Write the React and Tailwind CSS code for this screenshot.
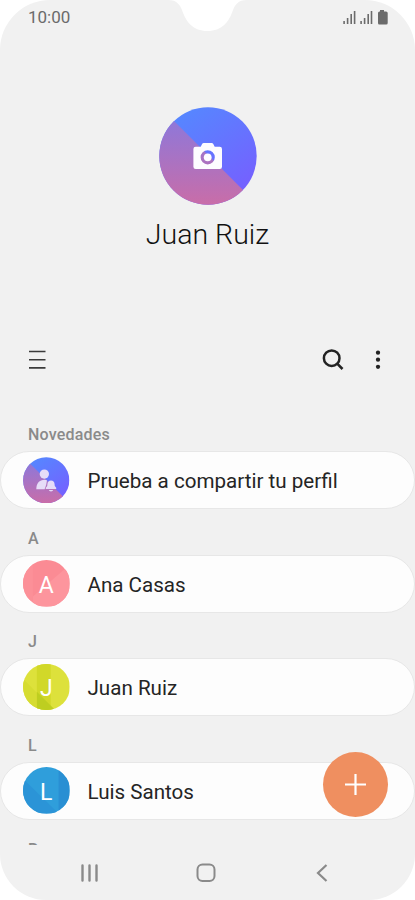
import React from 'react';

const sections = [
  { id: 1, label: 'Novedades', name: 'Prueba a compartir tu perfil', avatar: 'profile' },
  { id: 2, label: 'A', name: 'Ana Casas', avatar: 'A' },
  { id: 3, label: 'J', name: 'Juan Ruiz', avatar: 'J' },
  { id: 4, label: 'L', name: 'Luis Santos', avatar: 'L' },
];

const ProfileGradients = ({ id }) => (
  <defs>
    <linearGradient id={`${id}-top`} x1="0.2" y1="0" x2="0.85" y2="0.9">
      <stop offset="0" stopColor="#5489ff" />
      <stop offset="1" stopColor="#765fff" />
    </linearGradient>
    <linearGradient id={`${id}-bottom`} x1="0" y1="0" x2="0" y2="1">
      <stop offset="0.1" stopColor="#8b78dc" />
      <stop offset="1" stopColor="#c96da8" />
    </linearGradient>
    <clipPath id={`${id}-clip`}>
      <circle cx="49" cy="49" r="48.7" />
    </clipPath>
  </defs>
);

const ProfileBackground = ({ id }) => (
  <g clipPath={`url(#${id}-clip)`}>
    <rect width="98" height="98" fill={`url(#${id}-top)`} />
    <path d="M0 -1L98 97V98H0z" fill={`url(#${id}-bottom)`} />
  </g>
);

const CameraAvatar = () => (
  <svg viewBox="0 0 98 98" className="size-[98px]">
    <ProfileGradients id="hero" />
    <ProfileBackground id="hero" />
    <g transform="translate(-0.8 0)" fill="#fdfcff">
      <path
        fillRule="evenodd"
        d="M37.500 39.800h5l1.400-2.800q.5-1 1.700-1h7.800q1.200 0 1.700 1l1.400 2.800h5q2.300 0 2.300 2.300v17.600q0 2.300-2.300 2.300h-24q-2.300 0-2.300-2.300V42.100q0-2.300 2.300-2.300zM49.500 43.200a7.100 7.100 0 1 0 0 14.200a7.100 7.100 0 1 0 0-14.200z"
      />
      <circle cx="49.500" cy="50.300" r="3.900" />
    </g>
  </svg>
);

const ProfileAvatar = () => (
  <svg viewBox="0 0 98 98" className="size-[46.500px] shrink-0">
    <ProfileGradients id="row" />
    <ProfileBackground id="row" />
    <g fill="#e6dcf8">
      <circle cx="45" cy="36" r="9.800" />
      <path d="M28 68C28 56 34 48 46 48Q49 48 50.500 49Q49.500 60 45.500 68z" />
      <path d="M59 49.500Q66 49.500 66.500 57L67 61L70 65V67.500H48V65L51 61L51.500 57Q52 49.500 59 49.500zM54.500 69.500h9Q63 72.500 59 72.500T54.500 69.500z" />
    </g>
  </svg>
);

const avatarArt = {
  A: (
    <>
      <rect width="47" height="47" fill="#fb8b94" />
      <path d="M10 0V47H0V0z" fill="#fc9098" />
      <path d="M10 37L47 5V47H10z" fill="#fd959d" />
    </>
  ),
  J: (
    <>
      <rect width="47" height="47" fill="#dde13b" />
      <path d="M14 0H28V47H14z" fill="#d1d829" />
      <path d="M0 15L14 29V47H0z" fill="#d6dc32" />
      <path d="M14 28L33 47H14z" fill="#bece20" />
    </>
  ),
  L: (
    <>
      <rect width="47" height="47" fill="#2f9edb" />
      <path d="M0 12L35 46V47H0z" fill="#2b94d7" />
      <path d="M36 0H47V47H36z" fill="#298fd3" />
    </>
  ),
};

const LetterAvatar = ({ letter }) => (
  <div className="relative size-[46.500px] shrink-0 overflow-hidden rounded-full">
    <svg viewBox="0 0 47 47" className="size-full">
      {avatarArt[letter]}
    </svg>
    <span className="absolute inset-0 flex items-center justify-center pt-[3px] text-[23px] leading-none text-white">
      {letter}
    </span>
  </div>
);

const StatusBar = () => (
  <div className="relative flex h-[34px] items-center justify-between pl-7 pr-[27px] text-[#6b6b6b]">
    <span className="text-[17px] leading-none">10:00</span>
    <svg viewBox="0 0 415 34" className="absolute left-0 top-0 h-[34px] w-[415px]" fill="#fff">
      <path d="M168 0C177 0 180 5 182 10C186 22 193 31 207.500 31S229 22 233 10C235 5 238 0 247 0z" />
    </svg>
    <svg viewBox="0 0 45 16" className="h-4 w-[45px]" fill="currentColor">
      <path d="M0.300 12h1.600v3H.3zM3.800 9h1.600v6H3.800zM7.400 5h1.600v10H7.400zM10.800 2h1.600v13h-1.600z" />
      <path d="M17.300 12h1.600v3h-1.600zM20.800 9h1.600v6h-1.600zM24.400 5H26v10h-1.600zM27.700 2h1.600v13h-1.600z" />
      <path d="M37 1h4v1.500h2q1.700 0 1.700 1.500v10q0 1.500-1.500 1.500h-7Q35 15.500 35 14V4q0-1.500 1.500-1.500H37z" />
    </svg>
  </div>
);

const Toolbar = () => (
  <div className="flex h-10 items-center justify-between pl-[29px] pr-[34px] pt-0.5">
    <button aria-label="Menú">
      <svg viewBox="0 0 17 20" className="h-5 w-[17px]" stroke="#3b3b3b" strokeWidth="1.600">
        <path d="M0 1.500H16.500M0 9.700H16.500M0 17.900H16.500" />
      </svg>
    </button>
    <div className="flex items-center gap-[31px]">
      <button aria-label="Buscar">
        <svg viewBox="0 0 22 22" className="size-[22px]" fill="none" stroke="#232323" strokeWidth="2.500">
          <circle cx="9.700" cy="9.200" r="7.800" />
          <path d="M15.200 14.700L20.500 20" strokeWidth="2.600" />
        </svg>
      </button>
      <button aria-label="Más opciones">
        <svg viewBox="0 0 6 20" className="h-5 w-1.5" fill="#232323">
          <circle cx="3" cy="2.700" r="2.150" />
          <circle cx="3" cy="9.700" r="2.150" />
          <circle cx="3" cy="16.800" r="2.150" />
        </svg>
      </button>
    </div>
  </div>
);

const Section = ({ section }) => (
  <section>
    <h2 className="flex h-[45.500px] items-end pb-[7px] pl-7 text-[16px] font-medium leading-[19px] tracking-[0.200px] text-[#8a8a8a]">
      {section.label}
    </h2>
    <div className="flex h-[58px] items-center gap-[18px] rounded-full border border-[#e7e7e7] bg-[#fdfdfd] pl-[22px]">
      {section.avatar === 'profile' ? <ProfileAvatar /> : <LetterAvatar letter={section.avatar} />}
      <span className="whitespace-nowrap pt-[3px] text-[20.600px] text-[#252525]">{section.name}</span>
    </div>
  </section>
);

const NavigationBar = () => (
  <nav className="flex h-[55px] items-center pl-[81px]">
    <svg viewBox="0 0 18 18" className="size-[18px]" stroke="#8a8a8a" strokeWidth="2.400" strokeLinecap="round">
      <path d="M1.500 1.500V16.500M8.500 1.500V16.500M15.500 1.500V16.500" />
    </svg>
    <svg viewBox="0 0 20 20" className="ml-[96.500px] size-5" fill="none" stroke="#8a8a8a" strokeWidth="2">
      <rect x="1.500" y="1.500" width="17" height="16.500" rx="5" />
    </svg>
    <svg viewBox="0 0 12 18" className="ml-[100.500px] h-[18px] w-3" fill="none" stroke="#8a8a8a" strokeWidth="2.200">
      <path d="M10.500 1L2 9L10.500 17" />
    </svg>
  </nav>
);

export default function App() {
  return (
    <div className="h-[900px] w-[415px] bg-white font-['Roboto',sans-serif]">
      <div className="relative flex h-full flex-col overflow-hidden rounded-t-[50px] rounded-b-[46px] bg-[#f1f1f1]">
        <StatusBar />
        <header className="flex h-[305px] flex-col items-center pt-[73px]">
          <CameraAvatar />
          <h1 className="mt-2.5 text-[28.500px] font-light leading-10 text-[#111]">Juan Ruiz</h1>
        </header>
        <Toolbar />
        <main className="h-[466px] overflow-hidden pt-[26.500px]">
          {sections.map((section) => (
            <Section key={section.id} section={section} />
          ))}
          <h2 className="pl-7 pt-5 text-[16px] font-medium leading-[19px] text-[#8a8a8a]">R</h2>
        </main>
        <NavigationBar />
        <button
          aria-label="Añadir contacto"
          className="absolute left-[322.500px] top-[752px] flex size-[65px] items-center justify-center rounded-full bg-[#ef8f60]"
        >
          <svg viewBox="0 0 21 21" className="size-[21px]" stroke="#fff" strokeWidth="2.200">
            <path d="M10.500 0V21M0 10.500H21" />
          </svg>
        </button>
      </div>
    </div>
  );
}
